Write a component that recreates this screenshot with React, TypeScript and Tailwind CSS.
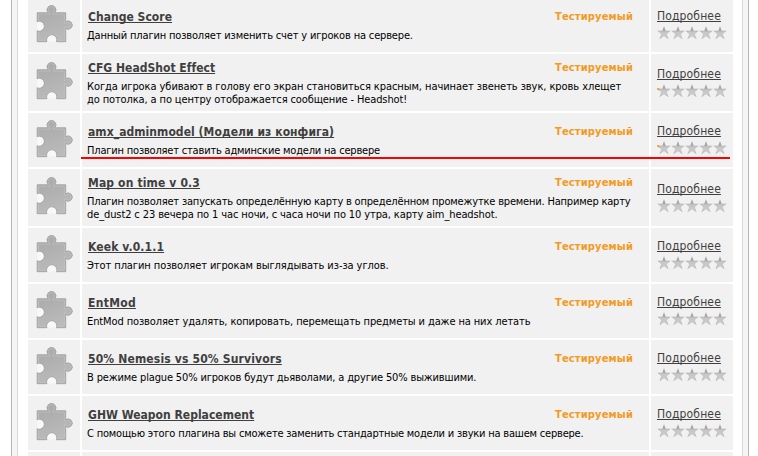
type Line = { text: string; tracking: string };
type Plugin = {
  title: string;
  tracking: string;
  lines: Line[];
  rated?: boolean;
};

const plugins: Plugin[] = [
  {
    title: "Change Score",
    tracking: "tracking-[0.03px]",
    lines: [{ text: "Данный плагин позволяет изменить счет у игроков на сервере.", tracking: "tracking-[-0.16px]" }],
  },
  {
    title: "CFG HeadShot Effect",
    tracking: "tracking-[0.02px]",
    lines: [
      { text: "Когда игрока убивают в голову его экран становиться красным, начинает звенеть звук, кровь хлещет", tracking: "tracking-[-0.07px]" },
      { text: "до потолка, а по центру отображается сообщение - Headshot!", tracking: "tracking-[-0.12px]" },
    ],
    rated: true,
  },
  {
    title: "amx_adminmodel (Модели из конфига)",
    tracking: "tracking-[0.06px]",
    lines: [{ text: "Плагин позволяет ставить админские модели на сервере", tracking: "tracking-[-0.19px]" }],
    rated: true,
  },
  {
    title: "Map on time v 0.3",
    tracking: "tracking-[0.15px]",
    lines: [
      { text: "Плагин позволяет запускать определённую карту в определённом промежутке времени. Например карту", tracking: "tracking-[-0.185px]" },
      { text: "de_dust2 с 23 вечера по 1 час ночи, с часа ночи по 10 утра, карту aim_headshot.", tracking: "tracking-[-0.11px]" },
    ],
  },
  {
    title: "Keek v.0.1.1",
    tracking: "tracking-[0.12px]",
    lines: [{ text: "Этот плагин позволяет игрокам выглядывать из-за углов.", tracking: "tracking-[-0.08px]" }],
  },
  {
    title: "EntMod",
    tracking: "tracking-[0.3px]",
    lines: [{ text: "EntMod позволяет удалять, копировать, перемещать предметы и даже на них летать", tracking: "tracking-[-0.11px]" }],
  },
  {
    title: "50% Nemesis vs 50% Survivors",
    tracking: "tracking-[0.16px]",
    lines: [{ text: "В режиме plague 50% игроков будут дьяволами, а другие 50% выжившими.", tracking: "tracking-[-0.15px]" }],
  },
  {
    title: "GHW Weapon Replacement",
    tracking: "tracking-[0.02px]",
    lines: [{ text: "С помощью этого плагина вы сможете заменить стандартные модели и звуки на вашем сервере.", tracking: "tracking-[-0.2px]" }],
  },
];

function PuzzleIcon() {
  return (
    <svg width="38" height="38" viewBox="0 0 38 38" aria-hidden="true">
      <defs>
        <linearGradient id="puzzle" x1="0" y1="0" x2="0.3" y2="1">
          <stop offset="0" stopColor="#a8a8a8" />
          <stop offset="0.5" stopColor="#b1b1b1" />
          <stop offset="1" stopColor="#bababa" />
        </linearGradient>
      </defs>
      <path
        d="M1.2 7.8H12.2A4.4 4.4 0 1 1 18.8 7.8H29.7V16.8A4.1 4.1 0 1 1 29.7 23.4V36.7H20.6A5.1 5.1 0 1 0 10.9 36.7H1.2V25.6A4.9 4.9 0 1 0 1.2 16.8Z"
        fill="url(#puzzle)"
        stroke="#a0a0a0"
        strokeWidth="0.9"
        strokeLinejoin="round"
      />
      <path
        d="M2.5 16V9.1H14L13 7A3.3 3.3 0 1 1 18 7L17 9.1H28.4V18.5L30.5 17.6A3 3 0 1 1 30.5 22.6L28.4 21.7V35.4H21.5M10.2 35.4H2.5V26.6"
        fill="none"
        stroke="#c4c4c4"
        strokeWidth="0.6"
      />
      <path d="M1.2 25A4.3 4.3 0 1 0 1.2 17.4M19.9 36.6A4.5 4.5 0 1 0 11.6 36.6" fill="#f8f8f8" />
    </svg>
  );
}

function Stars({ rated }: { rated?: boolean }) {
  return (
    <svg width="70" height="14" viewBox="0 0 70 14" aria-hidden="true">
      <defs>
        <linearGradient id="star" x1="0" y1="0" x2="0" y2="1">
          <stop offset="0" stopColor="#a0a0a0" />
          <stop offset="0.32" stopColor="#a8a8a8" />
          <stop offset="0.45" stopColor="#c6c6c6" />
          <stop offset="0.75" stopColor="#cacaca" />
          <stop offset="1" stopColor="#b4b4b4" />
        </linearGradient>
      </defs>
      {[0, 14, 28, 42, 56].map((x) => (
        <path
          key={x}
          transform={`translate(${x} 0)`}
          d="M7 .2 8.7 4.7H13.7L9.9 7.9 11.6 13.2 7 10.2 2.4 13.2 4.1 7.9 .3 4.7H5.3Z"
          fill="url(#star)"
        />
      ))}
      {rated && <path d="M0 4.2H2.4V6.6H1.8L0 5.2Z" fill="#f7921e" />}
    </svg>
  );
}

function Row({ plugin }: { plugin: Plugin }) {
  const tall = plugin.lines.length > 1;
  return (
    <div className={`flex shrink-0 gap-0.5 ${tall ? "h-[57px]" : "h-[54px]"}`}>
      <div className={`w-[52px] bg-[#f1f1f1] pl-2 ${tall ? "pt-2" : "pt-[7px]"}`}>
        <PuzzleIcon />
      </div>
      <div className={`w-[567px] bg-[#f1f1f1] pl-[5px] ${tall ? "pt-1.5" : "pt-[11px]"}`}>
        <div className="flex h-4 justify-between pr-4 pl-px font-bold whitespace-nowrap">
          <a className={`text-[12px] leading-4 text-[#3f3f3f] underline decoration-1 underline-offset-1 [text-decoration-skip-ink:none] ${plugin.tracking}`}>
            {plugin.title}
          </a>
          <span className="text-[11px] leading-4 tracking-[0.16px] text-[#f39a1f]">Тестируемый</span>
        </div>
        <div className="pt-1 text-[11px] leading-[13px] whitespace-nowrap text-black">
          {plugin.lines.map((line) => (
            <p key={line.text} className={line.tracking}>{line.text}</p>
          ))}
        </div>
      </div>
      <div className={`flex w-[82px] flex-col bg-[#f1f1f1] pl-1.5 ${tall ? "pt-3" : "pt-2.5"}`}>
        <a className="h-4 text-[12px] leading-4 tracking-[0.14px] text-[#3f3f3f] underline decoration-1 underline-offset-1 [text-decoration-skip-ink:none]">
          Подробнее
        </a>
        <div className="pt-0.5">
          <Stars rated={plugin.rated} />
        </div>
      </div>
    </div>
  );
}

export default function App() {
  return (
    <div className="h-[456px] w-[758px] overflow-hidden bg-white pl-[11px] font-['DejaVu_Sans_Condensed','DejaVu_Sans',sans-serif]">
      <div className="flex h-full w-[738px] border-x border-[#b5b5b5] bg-[#f5f5f5] px-[5px]">
        <div className="h-full w-[727px] overflow-hidden border-x border-[#d9d9d9] bg-white pl-2.5">
          <div className="relative -mt-0.5 flex w-[705px] flex-col gap-0.5">
            {plugins.map((plugin) => (
              <Row key={plugin.title} plugin={plugin} />
            ))}
            <div className="flex h-[54px] shrink-0 gap-0.5">
              <div className="w-[52px] bg-[#f1f1f1]" />
              <div className="w-[567px] bg-[#f1f1f1]" />
              <div className="w-[82px] bg-[#f1f1f1]" />
            </div>
            <div className="absolute top-[159px] left-[53px] h-0.5 w-[649px] bg-[#ff0000]" />
          </div>
        </div>
      </div>
    </div>
  );
}
